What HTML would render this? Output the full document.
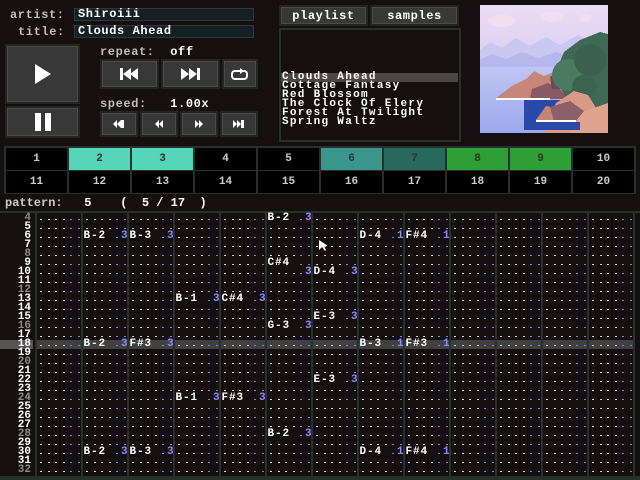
<!DOCTYPE html>
<html><head><meta charset="utf-8"><style>
*{margin:0;padding:0;box-sizing:border-box}
body{width:640px;height:480px;background:#150f0f;overflow:hidden;position:relative;font-family:"Liberation Mono",monospace;font-weight:bold;color:#fff}
.a{position:absolute}
.lbl{color:#bdbdbd;font-size:12px;line-height:12px;letter-spacing:0.6px}
.box{background:#152024;border:1px solid #2a3a3a;font-size:12px;line-height:11px;padding-left:3px;color:#fff;letter-spacing:0.6px}
.btn{background:#383838;border:2px solid #242424;box-shadow:inset 0 0 0 1px #4a4a4a;display:flex;align-items:center;justify-content:center}
.pat{font-size:12px;line-height:10px}
.sq{position:absolute;height:22px;display:flex;align-items:center;justify-content:center;font-size:11px;color:#ccc;background:#000}
.row{position:absolute;left:0;width:640px;height:9px;font-size:11px;line-height:9px}
.ln{position:absolute;left:0;width:33px;text-align:right;padding-right:2px}
.cell{position:absolute;width:44px;height:9px}
.sl{position:absolute;width:7.5px;height:9px;text-align:center}
.d{position:absolute;top:5px;left:3px;width:2px;height:1px;background:#cfcfcf}
.d.p{background:#7a7aff}
.vol{color:#8c8cff}
.sep{position:absolute;top:212px;width:2px;height:268px;background:#26302c}
.pl{position:absolute;left:282px;top:73px;font-size:11px;line-height:9px;letter-spacing:1.3px;white-space:pre}
</style></head><body>
<div class="a lbl" style="left:10px;top:9px">artist:</div>
<div class="a box" style="left:74px;top:8px;width:180px;height:13px">Shiroiii</div>
<div class="a lbl" style="left:18px;top:26px">title:</div>
<div class="a box" style="left:74px;top:25px;width:180px;height:13px">Clouds Ahead</div>

<div class="a btn" style="left:5px;top:44px;width:75px;height:60px"><svg width="18" height="20"><path d="M1 0v20l16-10z" fill="#fff"/></svg></div>
<div class="a btn" style="left:5px;top:106px;width:75px;height:32px"><svg width="18" height="18"><rect x="1" y="0" width="6" height="18" fill="#fff"/><rect x="11" y="0" width="6" height="18" fill="#fff"/></svg></div>

<div class="a lbl" style="left:100px;top:46px">repeat:&nbsp; <span style="color:#fff">off</span></div>
<div class="a btn" style="left:100px;top:59px;width:59px;height:30px"><svg width="20" height="12"><rect x="0" y="0" width="3" height="12" fill="#fff"/><path d="M3 6l8-6v12zM10 6l8-6v12z" fill="#fff"/></svg></div>
<div class="a btn" style="left:161px;top:59px;width:59px;height:30px"><svg width="20" height="12"><path d="M0 0l8 6-8 6zM8 0l8 6-8 6z" fill="#fff"/><rect x="16" y="0" width="3" height="12" fill="#fff"/></svg></div>
<div class="a btn" style="left:222px;top:59px;width:36px;height:30px"><svg width="18" height="12"><rect x="1" y="3" width="15" height="8" rx="3" fill="none" stroke="#fff" stroke-width="2"/><path d="M9 0l4 3-4 3z" fill="#fff"/></svg></div>

<div class="a lbl" style="left:100px;top:98px">speed:&nbsp;&nbsp; <span style="color:#fff">1.00x</span></div>
<div class="a btn" style="left:100px;top:111px;width:38px;height:26px"><svg width="12" height="8"><path d="M0 4l4-4v8zM4 4l4-4v8z" fill="#fff"/><rect x="8" y="0" width="3" height="8" fill="#fff"/></svg></div>
<div class="a btn" style="left:140px;top:111px;width:38px;height:26px"><svg width="9" height="8"><path d="M0 4l4-4v8zM4 4l4-4v8z" fill="#fff"/></svg></div>
<div class="a btn" style="left:180px;top:111px;width:38px;height:26px"><svg width="9" height="8"><path d="M0 0l4 4-4 4zM4 0l4 4-4 4z" fill="#fff"/></svg></div>
<div class="a btn" style="left:220px;top:111px;width:38px;height:26px"><svg width="12" height="8"><path d="M0 0l4 4-4 4zM4 0l4 4-4 4z" fill="#fff"/><rect x="8" y="0" width="3" height="8" fill="#fff"/></svg></div>

<div class="a btn" style="left:279px;top:5px;width:89px;height:21px;font-size:12px;letter-spacing:0.6px">playlist</div>
<div class="a btn" style="left:370px;top:5px;width:89px;height:21px;font-size:12px;letter-spacing:0.6px">samples</div>
<div class="a" style="left:279px;top:28px;width:182px;height:114px;border:2px solid #26302c;background:#150f0f"></div>
<div class="a" style="left:281px;top:73px;width:177px;height:9px;background:#4a4646"></div>
<div class="pl">Clouds Ahead
Cottage Fantasy
Red Blossom
The Clock Of Elery
Forest At Twilight
Spring Waltz</div>

<svg class="a" style="left:480px;top:5px" width="128" height="128" shape-rendering="crispEdges">
<defs><linearGradient id="sk" x1="0" y1="0" x2="0" y2="1"><stop offset="0" stop-color="#ecdcf6"/><stop offset="1" stop-color="#c2c2ee"/></linearGradient>
<linearGradient id="sea" x1="0" y1="0" x2="0" y2="1"><stop offset="0" stop-color="#c0c6f2"/><stop offset="1" stop-color="#9aa8ee"/></linearGradient></defs>
<rect width="128" height="128" fill="url(#sk)"/>
<path d="M0 45l10-8 12 6 14-10 14 8 16-9 14 8 18-10 16 8 14-6v30H0z" fill="#c8c8f0"/>
<path d="M0 55l12-6 14 5 16-7 16 6 18-6 18 5 18-6 16 5v20H0z" fill="#b4b8ec"/>
<rect x="0" y="62" width="128" height="66" fill="url(#sea)"/>
<ellipse cx="22" cy="16" rx="14" ry="6" fill="#f2def0"/><ellipse cx="72" cy="12" rx="12" ry="5" fill="#f2def0"/><ellipse cx="106" cy="13" rx="6" ry="4" fill="#f2def0"/>
<path d="M16 93l16-12 14-7 8-8 10 5 10-4 8 10 5 12-6 5H16z" fill="#c8857a"/>
<path d="M52 84l16-6 12 6 8 10H50z" fill="#8a5a64"/>
<path d="M70 72l10-6 8 4 6 14H72z" fill="#6a4a5a"/>
<rect x="16" y="93" width="54" height="2" fill="#fff"/>
<path d="M44 95h36v30H44z" fill="#2a4aaa"/>
<path d="M100 35l20-8 8 2v90h-30l-14-30 -10-18 10-24z" fill="#3e6a55"/>
<circle cx="88" cy="70" r="16" fill="#4c7a60"/><circle cx="110" cy="55" r="16" fill="#3a6050"/><circle cx="104" cy="82" r="12" fill="#3c6350"/>
<path d="M66 120l10-22 18-12 14 4 10 16 10 4v18H66z" fill="#d89a86"/>
<path d="M56 115l10-14 10 2 6 14z" fill="#c68476"/>
<path d="M100 108l28-10v30H90z" fill="#e0a48e"/>
<path d="M70 102l20-6 14 10-8 10H74z" fill="#8c6068"/>
<rect x="56" y="115" width="40" height="2" fill="#fff"/>
<rect x="60" y="117" width="40" height="8" fill="#2a4aaa"/>
</svg>

<div id="sq"></div>
<div class="a pat" style="left:5px;top:198px;color:#ccc">pattern:&nbsp;&nbsp; <span style="color:#fff">5&nbsp;&nbsp;&nbsp; (&nbsp; 5 / 17&nbsp; )</span></div>
<div class="a" style="left:0;top:211px;width:640px;height:2px;background:#26302c"></div>
<div id="g"></div>
<script>
var cols=[["1","#000"],["2","#55d6b8"],["3","#55d6b8"],["4","#000"],["5","#000"],["6","#3a968a"],["7","#27695c"],["8","#2e9e36"],["9","#2e9e36"],["10","#000"]];
var h='<div class="a" style="left:4px;top:146px;width:632px;height:48px;background:#26302c"></div>';
for(var i=0;i<10;i++){var x=6+i*63;h+='<div class="sq" style="left:'+x+'px;top:148px;width:61px;background:'+cols[i][1]+';color:'+(cols[i][1]=="#000"?"#ccc":"#333")+'">'+cols[i][0]+'</div>';h+='<div class="sq" style="left:'+x+'px;top:171px;width:61px">'+(i+11)+'</div>';}
document.getElementById('sq').innerHTML=h;
var notes={"1":{6:["B-2","3"],18:["B-2","3"],30:["B-2","3"]},"2":{6:["B-3","3"],18:["F#3","3"],30:["B-3","3"]},"3":{13:["B-1","3"],24:["B-1","3"]},"4":{13:["C#4","3"],24:["F#3","3"]},"5":{4:["B-2","3"],9:["C#4",""],10:["","3"],16:["G-3","3"],28:["B-2","3"]},"6":{10:["D-4","3"],15:["E-3","3"],22:["E-3","3"]},"7":{6:["D-4","1"],18:["B-3","1"],30:["D-4","1"]},"8":{6:["F#4","1"],18:["F#3","1"],30:["F#4","1"]}};
var g='';
for(var c=0;c<14;c++)g+='<div class="sep" style="left:'+(35+46*c)+'px"></div>';
for(var r=4;r<=32;r++){var y=214+(r-4)*9;var hl=r==18;
g+='<div class="row" style="top:'+y+'px">';
g+='<div class="ln" style="color:'+(r%4==0?'#8a8a8a':'#fff')+';'+(hl?'background:#555;':'')+'">'+r+'</div>';
for(var c=0;c<13;c++){var x=37+46*c;g+='<div class="cell" style="left:'+x+'px;'+(hl?'background:#404040;':'')+'">';
var n=notes[c]&&notes[c][r];
for(var s=0;s<6;s++){var sx=s*7.5;g+='<div class="sl" style="left:'+sx+'px">';
if(n&&s<3&&n[0]){g+=n[0][s];}
else if(n&&s==5&&n[1]){g+='<span class="vol">'+n[1]+'</span>';}
else if(n&&s==3&&n[0]){}
else g+='<div class="d'+(s>=4?' p':'')+'"></div>';
g+='</div>';}
g+='</div>';}
g+='</div>';}
g+='<div class="a" style="left:0;top:476px;width:640px;height:4px;background:#26302c"></div>';
document.getElementById('g').innerHTML=g;
</script>
<svg class="a" style="left:319px;top:240px" width="8" height="12"><path d="M0 0v10l3-3 3 4 1-1-2-4h4z" fill="#fff"/></svg>
</body></html>
